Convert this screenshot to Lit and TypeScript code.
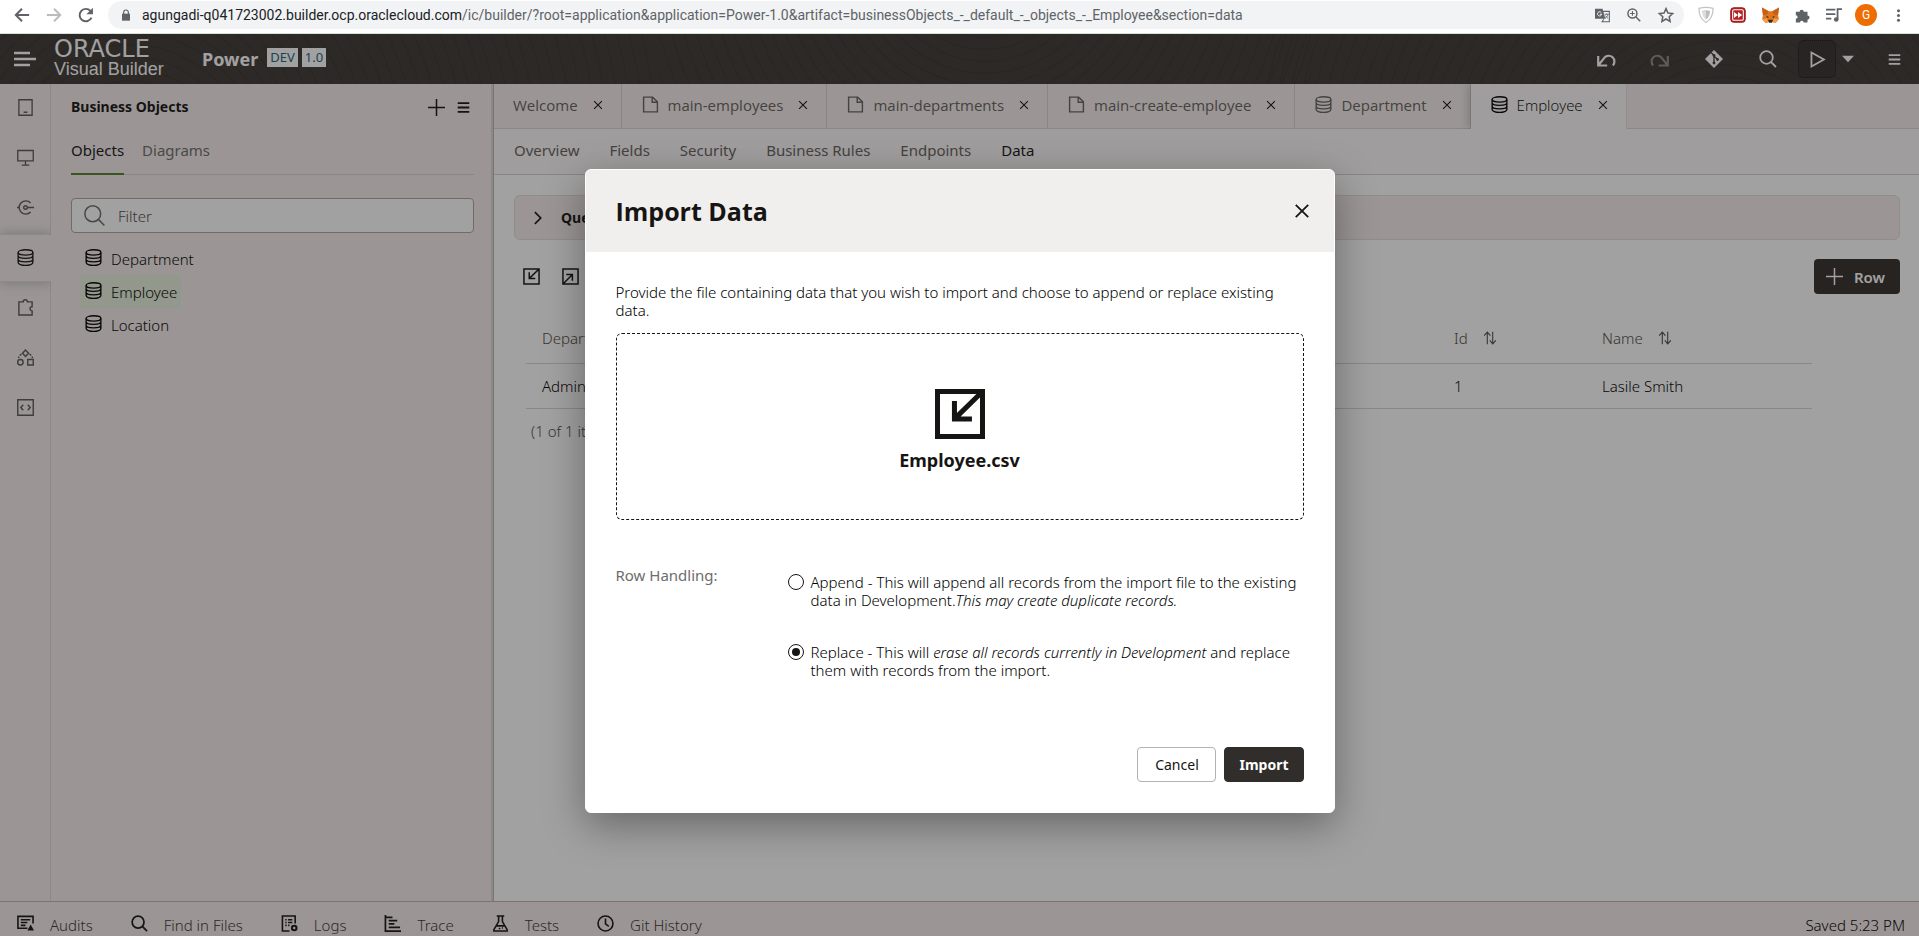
import { LitElement, html, css, svg, nothing, TemplateResult } from "lit";
import { customElement, state } from "lit/decorators.js";
import { classMap } from "lit/directives/class-map.js";

const database = svg`<g fill="none" stroke="currentColor" stroke-width="1.4"><ellipse cx="9" cy="3.600" rx="7.800" ry="2.800"/><path d="M1.200 3.600v10.800c0 1.600 3.500 3 7.800 3s7.800-1.400 7.800-3V3.600M1.200 7.200c0 1.600 3.500 2.800 7.800 2.800s7.800-1.200 7.800-2.800M1.200 10.900c0 1.600 3.500 2.800 7.800 2.800s7.800-1.200 7.800-2.800"/></g>`;
const search = svg`<g fill="none" stroke="currentColor" stroke-width="1.8"><circle cx="7.5" cy="7.5" r="6.3"/><path d="M12 12l5 5"/></g>`;

// Every glyph is drawn on an 18-unit grid.
const glyphs: Record<string, TemplateResult<2>> = {
  database,
  search,
  searchThin: svg`<g fill="none" stroke="currentColor" stroke-width="1.3"><circle cx="7.5" cy="7.5" r="6.8"/><path d="M12.3 12.3l5.2 5.2"/></g>`,
  file: svg`<path d="M1.7 1.2h9.6l5 5v10.6H1.7zM10.8 1.2v5.4h5.4" fill="none" stroke="currentColor" stroke-width="1.5"/>`,
  close: svg`<path d="M2 2l14 14M16 2L2 16" fill="none" stroke="currentColor" stroke-width="2"/>`,
  menu: svg`<path d="M1 3h16M1 9h16M1 15h16" stroke="currentColor" stroke-width="2.6"/>`,
  plus: svg`<path d="M9 0v18M0 9h18" stroke="currentColor" stroke-width="1.6"/>`,
  mobile: svg`<path d="M2 .8h14v16.4H2zM7 14h4" fill="none" stroke="currentColor" stroke-width="1.4"/>`,
  desktop: svg`<path d="M.8 1.6h16.4v11H.8zM9 12.6v4M5 17h8" fill="none" stroke="currentColor" stroke-width="1.4"/>`,
  service: svg`<g fill="none" stroke="currentColor" stroke-width="1.5"><path d="M14.4 4.2A7 7 0 1 0 14.4 13.8M0 9h2M11 9h7"/><circle cx="9" cy="9" r="1.9"/></g>`,
  puzzle: svg`<path d="M2 3h4.6a2.2 2.2 0 0 1 4.4 0h5v5.2a2.2 2.2 0 0 0 0 4.4V17H2z" fill="none" stroke="currentColor" stroke-width="1.5"/>`,
  shapes: svg`<g fill="none" stroke="currentColor" stroke-width="1.5"><path d="M9 1l3.2 3.4L9 7.8 5.8 4.4zM11.4 11.2h5.8V17h-5.8z"/><circle cx="3.6" cy="14.1" r="2.9"/><path d="M4.8 5.4C3 6.4 2 7.8 1.6 9.6M13.2 5.4c1.8 1 2.8 2.4 3.2 4.2" stroke-dasharray="2.4 1.4"/></g>`,
  code: svg`<path d="M.8.8h16.4v16.4H.8zM6.6 6L4 9l2.600 3M11.400 6L14 9l-2.600 3" fill="none" stroke="currentColor" stroke-width="1.5"/>`,
  undo: svg`<path d="M1.200 6v9.500h9M1.600 15L7.500 7.600a5.400 5.400 0 0 1 8.400 7.800" fill="none" stroke="currentColor" stroke-width="2.200"/>`,
  redo: svg`<path d="M16.800 6v9.500h-9M16.400 15L10.500 7.600a5.400 5.400 0 0 0-8.400 7.800" fill="none" stroke="currentColor" stroke-width="2.200"/>`,
  git: svg`<path d="M9 0l9 9-9 9-9-9z" fill="currentColor"/><g fill="none" stroke="#3c3835" stroke-width="1.3"><path d="M6 2.500l3 3v7.500M9 6l3.500 3.500"/></g><g fill="#3c3835"><circle cx="9" cy="5.500" r="1.400"/><circle cx="9" cy="13" r="1.400"/><circle cx="12.500" cy="9.500" r="1.400"/></g>`,
  play: svg`<path d="M2.600 1.600L15.800 9 2.600 16.400z" fill="none" stroke="currentColor" stroke-width="1.900"/>`,
  caret: svg`<path d="M0 4h18L9 14z" fill="currentColor"/>`,
  chevron: svg`<path d="M5 1.500L12.500 9 5 16.500" fill="none" stroke="currentColor" stroke-width="2.200"/>`,
  import: svg`<path d="M1 1h16v16H1zM6.600 4.500V11H13M17 1L7 10.700" fill="none" stroke="currentColor" stroke-width="1.600"/>`,
  importBold: svg`<path d="M.9.9h16.200v16.200H.9zM7 4.300v6.500h6.300M17 1L7.400 10.400" fill="none" stroke="currentColor" stroke-width="1.800"/>`,
  export: svg`<path d="M1 1h16v16H1zM4.500 7H11v6.400M1 17L10.800 7.200" fill="none" stroke="currentColor" stroke-width="1.600"/>`,
  sort: svg`<path d="M5.500 17V1.500M1.500 6l4-4.500 4 4.500M12.500 1v15.500M8.800 12l3.700 4.500 4-4.500" fill="none" stroke="currentColor" stroke-width="1.400"/>`,
  audits: svg`<path d="M11 14H1V1.500h16V9M4 5h10M4 8h7M4 11h5" fill="none" stroke="currentColor" stroke-width="1.700"/><path d="M14.500 10l3.500 6.500h-7z" fill="currentColor"/>`,
  logs: svg`<path d="M9 17H1.500V1H15v8M4.500 5H6M7.500 5H12M4.500 8H6M7.500 8H12M4.500 11H6M7.500 11H9" fill="none" stroke="currentColor" stroke-width="1.700"/><circle cx="14" cy="13.800" r="2.400" fill="none" stroke="currentColor" stroke-width="2.200"/>`,
  trace: svg`<path d="M1.500 0v17H18M1.500 2.500H9M5 6h9M5 9.500h6M5 13h12" fill="none" stroke="currentColor" stroke-width="1.800"/>`,
  tests: svg`<path d="M5 1h8M7 1v6L2 15.500V17h14v-1.500L11 7V1M5 11.500h8" fill="none" stroke="currentColor" stroke-width="1.700"/><circle cx="8" cy="14.300" r=".9"/><circle cx="11" cy="13.800" r=".7"/>`,
  clock: svg`<g fill="none" stroke="currentColor" stroke-width="1.700"><circle cx="9" cy="9" r="7.900"/><path d="M9 3.800V9.400l3.500 2.600"/></g>`,
  back: svg`<path d="M17 9H2.500M9 2L2 9l7 7" fill="none" stroke="currentColor" stroke-width="2.200"/>`,
  forward: svg`<path d="M1 9h14.500M9 2l7 7-7 7" fill="none" stroke="currentColor" stroke-width="2.200"/>`,
  reload: svg`<path d="M15.200 12A7 7 0 1 1 14 4.400" fill="none" stroke="currentColor" stroke-width="2.200"/><path d="M16.800.8v7.400H9.400z" fill="currentColor"/>`,
  lock: svg`<path d="M3 7h12v10.500H3z" fill="currentColor"/><path d="M5.500 8V5a3.500 3.500 0 0 1 7 0v3" fill="none" stroke="currentColor" stroke-width="1.800"/>`,
  translate: svg`<path d="M0 1h9l3.500 12H0z" fill="currentColor"/><path d="M9.500 4h7.700v12.500H8.500l2-3" fill="none" stroke="currentColor" stroke-width="1.300"/><path d="M7.600 5.600A2.500 2.500 0 1 0 8 7.500H5.800" fill="none" stroke="#f1f3f4" stroke-width="1.200"/><path d="M11.500 7.500h5M14 6.500v1M15.500 7.500c-.5 2.500-2 4-3.500 5M12.800 9c.6 1.600 1.800 2.800 3 3.500" fill="none" stroke="currentColor"/>`,
  zoomIn: svg`<g fill="none" stroke="currentColor" stroke-width="1.900"><circle cx="7" cy="7" r="5.800"/><path d="M11.300 11.300l5.700 5.700"/><path d="M4 7h6M7 4v6" stroke-width="1.400"/></g>`,
  star: svg`<path d="M9 1.800l2.200 4.900 5.300.6-3.900 3.600 1 5.300L9 13.500l-4.600 2.700 1-5.300L1.500 7.300l5.300-.6z" fill="none" stroke="currentColor" stroke-width="1.700"/>`,
  shield: svg`<path d="M1 1.500Q9-.5 17 1.500C17 9 15 14 9 17.500 3 14 1 9 1 1.500z" fill="#fff" stroke="#c4c4c4" stroke-width="1.400"/><path d="M4.500 4.500Q9 3 13.500 4.500C13.300 9 12 12 9 14z" fill="#bdbdbd"/><path d="M9 3.600V14C6 12 4.700 9 4.500 4.500z" fill="#dcdcdc"/>`,
  fastForward: svg`<rect x=".8" y=".8" width="16.400" height="16.400" rx="3.500" fill="#b7201f" stroke="#8f1817"/><rect x="3" y="3" width="12" height="12" rx="1.500" fill="#b7201f" stroke="#fff" stroke-width="1.200"/><path d="M4.500 5.500L9 9l-4.500 3.500zM9 5.500L13.700 9 9 12.500z" fill="#fff"/>`,
  fox: svg`<path d="M0 .5l7 4h4l7-4-1 8 .8 4.500-3.500 4-3.800-1.200h-3L3.700 17 .2 13 1 8.500z" fill="#e2761b"/><path d="M0 .5l7 4L5.500 8 1 8.500zM18 .5l-7 4L12.500 8l4.500.5z" fill="#c4601a"/><path d="M6.500 13.500h5l-1 3.300h-3z" fill="#3c2a1c"/><path d="M.2 13l5-.8 1.300 3.600L3.700 17zM17.800 13l-5-.8-1.300 3.600 2.800 1.200z" fill="#f0a050"/><path d="M4.500 9l3 1.800-2.200.7zM13.500 9l-3 1.800 2.200.7z" fill="#2f343b"/>`,
  extension: svg`<path d="M1 4.500h4.500a2.500 2.500 0 0 1 5 0H15V9a2.500 2.500 0 0 1 0 5v3.500h-4.600a2.200 2.200 0 0 0-4.400 0H1V13a2.200 2.200 0 0 0 0-4.400z" fill="currentColor"/>`,
  playlist: svg`<path d="M0 3h10.500M0 8h10.500M0 13h6" stroke="currentColor" stroke-width="2"/><path d="M13 14V2.500h5" fill="none" stroke="currentColor" stroke-width="2"/><circle cx="11.500" cy="14" r="2.600" fill="currentColor"/>`,
  dots: svg`<g fill="currentColor"><circle cx="9" cy="2.500" r="2.100"/><circle cx="9" cy="9" r="2.100"/><circle cx="9" cy="15.500" r="2.100"/></g>`,
};

const icon = (name: string, size = 18) =>
  html`<svg class="icon" viewBox="0 0 18 18" width=${size} height=${size} aria-hidden="true">${glyphs[name]}</svg>`;

const base = css`
  *, *::before, *::after { box-sizing: border-box; }
  button {
    font: inherit; color: inherit; background: none; border: 0; padding: 0; margin: 0;
    display: inline-flex; align-items: center; justify-content: center; cursor: pointer; white-space: nowrap;
  }
  .icon { display: block; flex: none; overflow: visible; }
`;

@customElement("browser-bar")
class BrowserBar extends LitElement {
  static styles = [base, css`
    :host {
      display: flex; align-items: center; height: 34px; padding: 0 10px 3px; background: #fff;
      border-bottom: 1px solid #d9e2da; color: #5f6368; font: 14px/18px Roboto, sans-serif;
    }
    .nav { display: flex; margin-right: 2px; }
    .nav button, .tools button { width: 32px; height: 28px; }
    .nav button { justify-content: flex-start; padding-left: 4px; }
    .disabled { color: #b9bbbe; }
    .address {
      flex: 1; min-width: 0; height: 28px; border-radius: 14px; background: #f1f3f4;
      display: flex; align-items: center; padding: 0 2px 0 12px;
    }
    .url { flex: 1; min-width: 0; margin-left: 10px; overflow: hidden; white-space: nowrap; text-overflow: ellipsis; }
    .host { color: #202124; }
    .tools { display: flex; align-items: center; }
    .outer { margin-left: 6px; margin-right: -5px; }
    .avatar {
      width: 22px; height: 22px; border-radius: 50%; background: #ef6c00; color: #fff;
      display: grid; place-items: center; font-size: 12px;
    }
  `];
  render() {
    return html`
      <div class="nav">
        <button aria-label="Back">${icon("back", 16)}</button>
        <button aria-label="Forward" class="disabled">${icon("forward", 16)}</button>
        <button aria-label="Reload">${icon("reload", 16)}</button>
      </div>
      <div class="address">
        ${icon("lock", 12)}
        <div class="url"><span class="host">agungadi-q041723002.builder.ocp.oraclecloud.com</span>/ic/builder/?root=application&amp;application=Power-1.0&amp;artifact=businessObjects_-_default_-_objects_-_Employee&amp;section=data</div>
        <div class="tools">
          <button aria-label="Translate">${icon("translate", 15)}</button>
          <button aria-label="Zoom">${icon("zoomIn", 14)}</button>
          <button aria-label="Bookmark">${icon("star", 16)}</button>
        </div>
      </div>
      <div class="tools outer">
        <button aria-label="Shield">${icon("shield", 16)}</button>
        <button aria-label="Fast forward">${icon("fastForward", 16)}</button>
        <button aria-label="Wallet">${icon("fox", 17)}</button>
        <button aria-label="Extensions">${icon("extension", 15)}</button>
        <button aria-label="Playlist">${icon("playlist", 16)}</button>
        <button aria-label="Profile"><span class="avatar">G</span></button>
        <button aria-label="More">${icon("dots", 13)}</button>
      </div>`;
  }
}

@customElement("import-dialog")
class ImportDialog extends LitElement {
  @state() private mode = "replace";

  static styles = [base, css`
    :host {
      display: block; width: 750px; max-width: 100%; background: #fff; color: #161513;
      border: 1px solid #fff; border-radius: 6px; overflow: hidden;
      box-shadow: 0 12px 40px rgba(0, 0, 0, 0.36); font: 300 15px/18px "Noto Sans", "Open Sans", sans-serif;
    }
    header {
      display: flex; align-items: center; justify-content: space-between;
      height: 82px; padding: 0 24px 0 30px; background: #f0efed;
    }
    h1 { margin: 0; font: 700 25px/32px "Open Sans", "Noto Sans", sans-serif; }
    .close { width: 16px; height: 16px; }
    .body { padding: 31px 30px 30px; color: #000; }
    .intro { margin: 0 0 14px; }
    .drop {
      position: relative; display: flex; flex-direction: column; align-items: center; justify-content: center; gap: 9px;
      height: 187px; padding-top: 7px; border: 1px dashed #161513; border-radius: 6px;
      color: #161513; font-size: 18px; line-height: 24px; font-weight: 700;
    }
    .drop input { position: absolute; inset: 0; width: 100%; opacity: 0; }
    .rows { display: grid; grid-template-columns: 172px 1fr; margin-top: 46px; }
    .caption { color: #6f6c69; font-weight: 400; line-height: 18px; }
    .choices { display: flex; flex-direction: column; gap: 34px; padding-top: 7px; }
    .choice { display: flex; gap: 7px; }
    .choice input {
      appearance: none; flex: none; width: 16px; height: 16px; margin: 1px 0 0;
      border: 1px solid #161513; border-radius: 50%; display: grid; place-items: center; background: #fff;
    }
    .choice input:checked::after { content: ""; width: 8px; height: 8px; border-radius: 50%; background: #161513; }
    footer { display: flex; justify-content: flex-end; gap: 8px; margin-top: 68px; }
    footer button {
      height: 35px; min-width: 79px; padding: 0 14px; border: 1px solid #b4b2af; border-radius: 4px;
      color: #161513; font-size: 14px; font-weight: 400;
    }
    footer .primary { background: #312d2a; border-color: #312d2a; color: #fff; font-weight: 700; }
  `];

  render() {
    return html`
      <header>
        <h1 id="title">Import Data</h1>
        <button class="close" aria-label="Close">${icon("close", 16)}</button>
      </header>
      <div class="body">
        <p class="intro">Provide the file containing data that you wish to import and choose to append or replace existing data.</p>
        <label class="drop">${icon("importBold", 50)}<span>Employee.csv</span><input type="file" accept=".csv,.zip" /></label>
        <div class="rows" role="radiogroup" aria-labelledby="rows">
          <span class="caption" id="rows">Row Handling:</span>
          <div class="choices">
            <label class="choice">
              <input type="radio" name="mode" .checked=${this.mode === "append"} @change=${() => (this.mode = "append")} />
              <span>Append - This will append all records from the import file to the existing data in Development.<em>This may create duplicate records.</em></span>
            </label>
            <label class="choice">
              <input type="radio" name="mode" .checked=${this.mode === "replace"} @change=${() => (this.mode = "replace")} />
              <span>Replace - This will <em>erase all records currently in Development</em> and replace them with records from the import.</span>
            </label>
          </div>
        </div>
        <footer><button>Cancel</button><button class="primary">Import</button></footer>
      </div>`;
  }
}

const rail = [
  ["mobile", "Mobile Applications"], ["desktop", "Web Applications"], ["service", "Services"], ["database", "Business Objects"],
  ["puzzle", "Components"], ["shapes", "Processes"], ["code", "Source"],
];
const openTabs: [string, string][] = [
  ["", "Welcome"], ["file", "main-employees"], ["file", "main-departments"],
  ["file", "main-create-employee"], ["database", "Department"], ["database", "Employee"],
];
const sections = ["Overview", "Fields", "Security", "Business Rules", "Endpoints", "Data"];
const objects = ["Department", "Employee", "Location"];
const tools = [["audits", "Audits"], ["search", "Find in Files"], ["logs", "Logs"], ["trace", "Trace"], ["tests", "Tests"], ["clock", "Git History"]];

@customElement("app-root")
class AppRoot extends LitElement {
  static styles = [base, css`
    :host {
      display: flex; flex-direction: column; height: 100vh; overflow: hidden;
      font: 15px/20px "Noto Sans", "Open Sans", sans-serif; color: #161513;
    }
    .app { position: relative; flex: 1; min-height: 0; display: flex; flex-direction: column; background: #f3edeb; }
    .scrim {
      position: absolute; inset: 0; display: grid; place-items: center; padding-top: 12px;
      background: rgba(22, 21, 19, 0.4);
    }

    .top {
      display: flex; align-items: center; height: 50px; flex: none; padding: 0 18px 0 14px; color: #fff;
      background:
        repeating-radial-gradient(circle at 20% 260%, transparent 0 10px, rgba(20, 16, 14, 0.14) 11px 12px) 0 0 / 34% 100% no-repeat,
        repeating-radial-gradient(circle at 50% -160%, transparent 0 10px, rgba(20, 16, 14, 0.14) 11px 12px) 52% 0 / 34% 100% no-repeat,
        repeating-radial-gradient(circle at 70% 300%, transparent 0 10px, rgba(20, 16, 14, 0.14) 11px 12px) 100% 0 / 34% 100% no-repeat,
        #3c3835;
    }
    .burger { margin-right: 18px; }
    .brand { display: flex; flex-direction: column; margin-right: 32px; width: 116px; }
    .oracle { font: 24px/20px "DejaVu Sans", sans-serif; }
    .product { font: 18px/20px "Liberation Sans", Arial, sans-serif; white-space: nowrap; }
    .project { margin-right: 9px; font-size: 18px; font-weight: 700; }
    .chip { height: 19px; margin: 0 4px 4px 0; padding: 0 3px; background: #fff; color: #20617c; font-size: 13px; line-height: 19px; }
    .actions { display: flex; align-items: center; margin-left: auto; }
    .actions button { width: 54px; height: 38px; }
    .actions .faint { color: #8d8986; }
    .actions .run { width: 38px; margin-left: 3px; border: 1px dotted #171412; border-radius: 6px; background: #34302d; }
    .actions .drop { width: 24px; }
    .actions .more { width: 14px; margin-left: 27px; }

    .work { flex: 1; min-height: 0; display: flex; }
    .rail { width: 51px; flex: none; display: flex; flex-direction: column; gap: 2px; border-right: 1px solid #dcd8d5; color: #5b5754; }
    .rail button { height: 48px; width: 50px; padding-bottom: 2px; }
    .rail .active {
      width: 51px; background: #f3edeb; color: #161513; border: solid #dcd8d5; border-width: 1px 0;
      box-shadow: 0 0 12px rgba(0, 0, 0, 0.26); clip-path: inset(-14px 0 -14px 0);
    }

    .panel { width: 440px; flex: none; padding: 0 17px 0 20px; }
    .panel-head { display: flex; align-items: center; height: 46px; gap: 12px; padding-right: 4px; }
    .panel-head h2 { flex: 1; margin: 0; font-size: 14px; line-height: 20px; font-weight: 700; }
    .panel-tabs { display: flex; gap: 18px; height: 45px; border-bottom: 1px solid #d8d4d1; color: #6f6b68; }
    .panel-tabs button { height: 45px; padding-bottom: 4px; border-bottom: 2px solid transparent; }
    .panel-tabs .active { color: #161513; border-color: #508223; }
    .filter {
      display: flex; align-items: center; gap: 13px; height: 35px; margin-top: 23px; padding: 0 12px;
      border: 1px solid #aaa6a3; border-radius: 4px; background: #fff; color: #6f6b68;
    }
    .filter input { flex: 1; min-width: 0; border: 0; outline: 0; background: none; font: inherit; font-weight: 300; padding: 0; }
    .filter input::placeholder { color: #4f4b48; opacity: 1; }
    .objects { margin: 9px 0 0; padding: 0 0 0 9px; list-style: none; font-weight: 300; color: #000; }
    .objects button { height: 33px; padding: 0 4px 0 5px; gap: 9px; }
    .objects .icon { margin-bottom: 3px; }
    .objects .active { background: #e4f1dc; }

    .splitter { width: 3px; flex: none; background: #dbd6d3; border-right: 1px solid #bbb6b3; }
    .content { flex: 1; min-width: 0; background: #fff; }
    .tabs { display: flex; height: 45px; background: #f3edeb; font-family: "Open Sans", "Noto Sans", sans-serif; }
    .tab {
      display: flex; align-items: center; padding: 0 18px 3px 20px; gap: 15px;
      border: solid #d6d2cf; border-width: 0 1px 1px 0; color: #65615e; white-space: nowrap;
    }
    .tab:first-child { padding-left: 19px; }
    .tab .name { gap: 9px; }
    .tab .x { color: #161513; width: 10px; }
    .tab.active {
      background: #fbf9f8; color: #000; font-weight: 300; border-bottom-color: #fbf9f8;
      box-shadow: -4px 0 8px rgba(0, 0, 0, 0.16); clip-path: inset(0 0 0 -12px);
    }
    .rest { flex: 1; border-bottom: 1px solid #d6d2cf; }
    .sections { display: flex; gap: 30px; height: 46px; padding: 0 20px 3px; background: #fbf9f8; border-bottom: 1px solid #d6d2cf; color: #65615e; }
    .sections .active { color: #161513; }
    .page { padding: 20px 19px 0 20px; }
    .query {
      width: 100%; height: 45px; padding: 0 16px; gap: 16px; justify-content: flex-start;
      border: 1px solid #e3dcda; border-radius: 6px; background: #f3edeb; font-size: 14px; font-weight: 700;
    }
    .toolbar { display: flex; align-items: center; gap: 22px; margin-top: 19px; padding-left: 9px; }
    .add {
      margin-left: auto; height: 35px; padding: 0 15px 0 12px; gap: 11px; border-radius: 4px;
      background: #312d2a; color: #fff; font-weight: 600;
    }
    table { width: calc(100% - 100px); margin: 27px 0 0 12px; border-collapse: collapse; table-layout: fixed; font-weight: 300; color: #000; }
    th, td { padding: 0 16px; border-bottom: 1px solid #d8d4d1; text-align: left; font-weight: 300; }
    th { height: 42px; padding-bottom: 8px; color: #4f4b48; }
    td { height: 45px; }
    .col-id { width: 148px; }
    .col-name { width: 226px; }
    .head { display: flex; align-items: center; gap: 15px; }
    .count { margin: 12px 0 0 17px; font-weight: 300; color: #4f4b48; }

    .status {
      display: flex; align-items: center; gap: 38px; height: 35px; flex: none; padding: 12px 14px 0 17px;
      border-top: 1px solid #b8b4b1; color: #3a3633; font-weight: 300;
    }
    .status button { gap: 16px; height: 20px; }
    .status .icon { color: #161513; margin-bottom: 3px; }
    .saved { margin-left: auto; color: #000; }
  `];

  render() {
    return html`
      <browser-bar></browser-bar>
      <div class="app">
        <header class="top">
          <button class="burger" aria-label="Navigation">
            <svg class="icon" width="22" height="16" viewBox="0 0 22 16"><path d="M0 2h16M0 8h22M0 14h16" stroke="#fff" stroke-width="2.400" /></svg>
          </button>
          <div class="brand"><span class="oracle">ORACLE</span><span class="product">Visual Builder</span></div>
          <span class="project">Power</span><span class="chip">DEV</span><span class="chip">1.0</span>
          <div class="actions">
            <button aria-label="Undo">${icon("undo")}</button>
            <button aria-label="Redo" class="faint">${icon("redo")}</button>
            <button aria-label="Git">${icon("git")}</button>
            <button aria-label="Search">${icon("search")}</button>
            <button aria-label="Run" class="run">${icon("play", 17)}</button>
            <button aria-label="Run options" class="drop">${icon("caret", 12)}</button>
            <button aria-label="Menu" class="more">${icon("menu", 13)}</button>
          </div>
        </header>

        <div class="work">
          <nav class="rail">
            ${rail.map(([g, label]) => html`<button aria-label=${label} class=${classMap({ active: g === "database" })}>${icon(g, 17)}</button>`)}
          </nav>
          <aside class="panel">
            <div class="panel-head">
              <h2>Business Objects</h2>
              <button aria-label="Add">${icon("plus", 17)}</button>
              <button aria-label="Panel menu">${icon("menu", 13)}</button>
            </div>
            <div class="panel-tabs"><button class="active">Objects</button><button>Diagrams</button></div>
            <label class="filter">${icon("searchThin", 21)}<input type="text" placeholder="Filter" aria-label="Filter" /></label>
            <ul class="objects">
              ${objects.map((o) => html`<li><button class=${classMap({ active: o === "Employee" })}>${icon("database", 17)}${o}</button></li>`)}
            </ul>
          </aside>
          <div class="splitter"></div>
          <main class="content">
            <div class="tabs">
              ${openTabs.map(([g, name]) => html`
                <div class="tab ${classMap({ active: name === "Employee" })}">
                  <button class="name">${g ? icon(g, 17) : nothing}${name}</button>
                  <button class="x" aria-label="Close ${name}">${icon("close", 10)}</button>
                </div>`)}
              <div class="rest"></div>
            </div>
            <nav class="sections">
              ${sections.map((s) => html`<button class=${classMap({ active: s === "Data" })}>${s}</button>`)}
            </nav>
            <div class="page">
              <button class="query">${icon("chevron", 14)}Query</button>
              <div class="toolbar">
                <button aria-label="Import">${icon("import", 17)}</button>
                <button aria-label="Export">${icon("export", 17)}</button>
                <button class="add">${icon("plus", 17)}Row</button>
              </div>
              <table>
                <colgroup><col /><col class="col-id" /><col class="col-name" /></colgroup>
                <thead><tr>
                  <th>Department</th>
                  <th><span class="head">Id ${icon("sort", 14)}</span></th>
                  <th><span class="head">Name ${icon("sort", 14)}</span></th>
                </tr></thead>
                <tbody><tr><td>Administration</td><td>1</td><td>Lasile Smith</td></tr></tbody>
              </table>
              <p class="count">(1 of 1 items)</p>
            </div>
          </main>
        </div>

        <footer class="status">
          ${tools.map(([g, label]) => html`<button>${icon(g, 17)}${label}</button>`)}
          <span class="saved">Saved 5:23 PM</span>
        </footer>

        <div class="scrim"><import-dialog role="dialog" aria-modal="true" aria-label="Import Data"></import-dialog></div>
      </div>`;
  }
}
